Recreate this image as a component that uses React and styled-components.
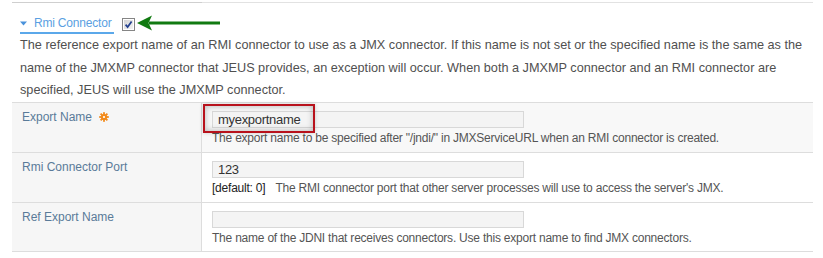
import React from "react";
import styled, { createGlobalStyle } from "styled-components";

const GlobalStyle = createGlobalStyle`
  html, body {
    margin: 0;
    padding: 0;
    background: #ffffff;
  }
  body {
    font-family: "Liberation Sans", Arial, sans-serif;
    font-size: 12px;
    color: #505050;
  }
`;

const rows = [
  {
    label: "Export Name",
    required: true,
    value: "myexportname",
    desc: 'The export name to be specified after "/jndi/" in JMXServiceURL when an RMI connector is created.',
    active: true,
    marked: true,
  },
  {
    label: "Rmi Connector Port",
    value: "123",
    def: "[default: 0]",
    desc: "The RMI connector port that other server processes will use to access the server's JMX.",
  },
  {
    label: "Ref Export Name",
    value: "",
    desc: "The name of the JDNI that receives connectors. Use this export name to find JMX connectors.",
  },
];

const App = () => {
  return (
    <>
      <GlobalStyle />
      <Page>
        <TopRule>
          <RuleLeft />
          <RuleRight />
        </TopRule>
        <SectionHead>
          <Heading>
            <Caret />
            Rmi Connector
          </Heading>
          <CheckBox />
          <Arrow />
        </SectionHead>
        <Intro>
          The reference export name of an RMI connector to use as a JMX connector. If this name is not set or the specified name is the same as the
          <br />
          name of the JMXMP connector that JEUS provides, an exception will occur. When both a JMXMP connector and an RMI connector are
          <br />
          specified, JEUS will use the JMXMP connector.
        </Intro>
        <Table>
          {rows.map((r, i) => (
            <Row key={r.label} $active={r.active} $last={i === rows.length - 1}>
              <LabelCell>
                {r.label}
                {r.required && <Gear />}
              </LabelCell>
              <ValueCell>
                <Field>{r.value}</Field>
                <Desc>
                  {r.def && <Default>{r.def}</Default>}
                  {r.desc}
                </Desc>
                {r.marked && <Marker />}
              </ValueCell>
            </Row>
          ))}
        </Table>
      </Page>
    </>
  );
};
export default App;

const Caret = () => (
  <CaretSvg width="7" height="5" viewBox="0 0 7 5">
    <path d="M0 0.5 H7 L3.5 4.5 Z" fill="#4a92db" />
  </CaretSvg>
);

const CheckBox = () => (
  <BoxSvg width="13" height="13" viewBox="0 0 13 13">
    <defs>
      <linearGradient id="cbg" x1="0" y1="0" x2="1" y2="1">
        <stop offset="0" stopColor="#d4d4d4" />
        <stop offset="1" stopColor="#f4f4f4" />
      </linearGradient>
    </defs>
    <rect x="0.5" y="0.5" width="12" height="12" fill="#ffffff" stroke="#858585" />
    <rect x="2" y="2" width="9" height="9" fill="url(#cbg)" />
    <path d="M3.6 6.6 L5.6 9 L9.6 3.4" fill="none" stroke="#23408e" strokeWidth="1.7" />
  </BoxSvg>
);

const Arrow = () => (
  <ArrowSvg width="84" height="18" viewBox="0 0 84 18">
    <path d="M12 9 H83" stroke="#117a11" strokeWidth="3.2" />
    <path d="M0 9 L15 1.5 L11.5 9 L15 16.5 Z" fill="#117a11" />
  </ArrowSvg>
);

const Gear = () => (
  <GearSvg width="10" height="10" viewBox="0 0 10 10">
    <g fill="#f28a1a">
      <circle cx="5" cy="5" r="3.1" />
      {[0, 45, 90, 135, 180, 225, 270, 315].map((a) => (
        <rect key={a} x="4.1" y="0.2" width="1.8" height="2.4" transform={`rotate(${a} 5 5)`} />
      ))}
    </g>
    <circle cx="5" cy="5" r="1.1" fill="#ffffff" />
  </GearSvg>
);

const Page = styled.div`
  width: 801px;
  padding: 2px 0 0 12px;
`;

const TopRule = styled.div`
  display: flex;
  height: 1px;
`;

const RuleLeft = styled.div`
  width: 190px;
  background: #cfcfcf;
`;

const RuleRight = styled.div`
  flex: 1;
  background: #e2e2e2;
`;

const SectionHead = styled.div`
  position: relative;
  display: flex;
  align-items: flex-start;
  margin: 11px 0 0 8px;
  height: 20px;
`;

const Heading = styled.div`
  display: flex;
  align-items: center;
  gap: 7px;
  height: 18px;
  line-height: 18px;
  padding-right: 3px;
  border-bottom: 2px solid #5ba8ea;
  color: #5a9fe2;
  font-size: 12px;
  letter-spacing: -0.2px;
`;

const CaretSvg = styled.svg`
  display: block;
  margin-top: 1px;
`;

const BoxSvg = styled.svg`
  display: block;
  margin: 4px 0 0 8px;
`;

const ArrowSvg = styled.svg`
  position: absolute;
  left: 117px;
  top: 0px;
`;

const Intro = styled.p`
  margin: 0;
  padding-left: 8px;
  line-height: 22.6px;
  font-size: 12.7px;
  letter-spacing: 0;
  white-space: nowrap;
  color: #505050;
`;

const Table = styled.div`
  display: flex;
  flex-direction: column;
`;

const Row = styled.div`
  display: grid;
  grid-template-columns: 190px 1fr;
  height: 50px;
  box-sizing: border-box;
  border-top: 1px solid #dddddd;
  border-bottom: ${(p) => (p.$last ? "1px solid #dddddd" : "none")};
  background: ${(p) => (p.$active ? "#f8f8f8" : "#ffffff")};
`;

const LabelCell = styled.div`
  display: flex;
  align-items: flex-start;
  gap: 7px;
  box-sizing: border-box;
  padding: 5px 0 0 10px;
  line-height: 18px;
  background: #f6f6f6;
  border-right: 1px solid #dddddd;
  color: #5a7b99;
  font-size: 12px;
  letter-spacing: 0;
`;

const GearSvg = styled.svg`
  display: block;
  margin-top: 4px;
`;

const ValueCell = styled.div`
  position: relative;
  padding: 8px 0 0 10px;
`;

const Field = styled.div`
  box-sizing: border-box;
  width: 312px;
  height: 17px;
  padding-left: 5px;
  border: 1px solid #d8d8d8;
  background: #f4f4f4;
  color: #333333;
  font-size: 13px;
  letter-spacing: -0.3px;
  line-height: 15px;
`;

const Desc = styled.div`
  margin-top: 1px;
  line-height: 18px;
  font-size: 12px;
  letter-spacing: -0.22px;
  white-space: nowrap;
  color: #555555;
`;

const Default = styled.span`
  color: #222222;
  margin-right: 10px;
`;

const Marker = styled.div`
  position: absolute;
  left: 1px;
  top: 1px;
  width: 112px;
  height: 29px;
  box-sizing: border-box;
  border: 2px solid #b8121c;
  box-shadow: inset 0 0 6px rgba(0, 0, 0, 0.28), 0 0 4px rgba(0, 0, 0, 0.18);
  pointer-events: none;
`;
